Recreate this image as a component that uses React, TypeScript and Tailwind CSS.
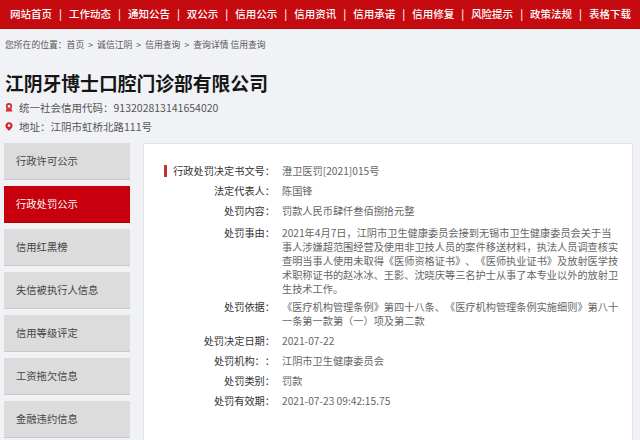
import React from 'react';

const navItems = [
  '网站首页',
  '工作动态',
  '通知公告',
  '双公示',
  '信用公示',
  '信用资讯',
  '信用承诺',
  '信用修复',
  '风险提示',
  '政策法规',
  '表格下载',
];

const sideItems = [
  '行政许可公示',
  '行政处罚公示',
  '信用红黑榜',
  '失信被执行人信息',
  '信用等级评定',
  '工资拖欠信息',
  '金融违约信息',
];

interface Row {
  label: string;
  lines: string[];
  first?: boolean;
  cls?: string;
}

const rows: Row[] = [
  { label: '行政处罚决定书文号：', lines: ['澄卫医罚[2021]015号'], first: true },
  { label: '法定代表人：', lines: ['陈国锋'] },
  { label: '处罚内容：', lines: ['罚款人民币肆仟叁佰捌拾元整'] },
  {
    label: '处罚事由：',
    lines: [
      '2021年4月7日，江阴市卫生健康委员会接到无锡市卫生健康委员会关于当',
      '事人涉嫌超范围经营及使用非卫技人员的案件移送材料，执法人员调查核实',
      '查明当事人使用未取得《医师资格证书》、《医师执业证书》及放射医学技',
      '术职称证书的赵冰冰、王影、沈晓庆等三名护士从事了本专业以外的放射卫',
      '生技术工作。',
    ],
    cls: 'pt-[5px] pb-[1px]',
  },
  {
    label: '处罚依据：',
    lines: [
      '《医疗机构管理条例》第四十八条、《医疗机构管理条例实施细则》第八十',
      '一条第一款第（一）项及第二款',
    ],
  },
  { label: '处罚决定日期：', lines: ['2021-07-22'] },
  { label: '处罚机构：：', lines: ['江阴市卫生健康委员会'] },
  { label: '处罚类别：', lines: ['罚款'] },
  { label: '处罚有效期：', lines: ['2021-07-23 09:42:15.75'] },
];

const crumbs = ['首页', '诚信江阴', '信用查询', '查询详情 信用查询'];

const SealIcon = () => (
  <svg width="8" height="9" viewBox="0 0 8 9" className="shrink-0">
    <circle cx="4" cy="3.2" r="2.3" fill="none" stroke="#d0262b" strokeWidth="1.6" />
    <path d="M1.6 5.6 L0.6 8.6 H7.4 L6.4 5.6 L5.2 6.3 H2.8 Z" fill="#d0262b" />
  </svg>
);

const PinIcon = () => (
  <svg width="8" height="9" viewBox="0 0 8 9" className="shrink-0">
    <path d="M4 0.3 C1.9 0.3 0.4 1.8 0.4 3.7 C0.4 5.8 4 8.8 4 8.8 C4 8.8 7.6 5.8 7.6 3.7 C7.6 1.8 6.1 0.3 4 0.3 Z" fill="#d0262b" />
    <circle cx="4" cy="3.6" r="1.3" fill="#fff" />
  </svg>
);

export default function App() {
  return (
    <div
      className="w-[640px] h-[440px] overflow-hidden bg-[#f1f2f6] [text-spacing-trim:space-all]"
      style={{ fontFamily: '"Noto Sans CJK SC", "Noto Sans", sans-serif' }}
    >
      <div className="h-[29px] bg-[#c50b10] border-b border-[#b00509] flex items-center pl-[10px] gap-[7px] text-white text-[10.5px] font-medium whitespace-nowrap">
        {navItems.map((n, i) => (
          <React.Fragment key={n}>
            {i > 0 && <span>|</span>}
            <span>{n}</span>
          </React.Fragment>
        ))}
      </div>

      <div className="mt-[10px] px-[5px] flex items-center text-[8.8px] leading-[12px] text-[#555] whitespace-nowrap">
        <span>您所在的位置：</span>
        {crumbs.map((c, i) => (
          <React.Fragment key={c}>
            {i > 0 && <span className="mx-[4px]">&gt;</span>}
            <span>{c}</span>
          </React.Fragment>
        ))}
      </div>

      <h1 className="mt-[20px] px-[5px] text-[18.8px] leading-[24px] font-bold text-[#161616] whitespace-nowrap">
        江阴牙博士口腔门诊部有限公司
      </h1>

      <div className="mt-[3px] flex items-center gap-[6px] pl-[5px] h-[19px] text-[10.5px] text-[#555]">
        <SealIcon />
        <span>统一社会信用代码：913202813141654020</span>
      </div>
      <div className="flex items-center gap-[6px] pl-[5px] h-[19px] text-[10.5px] text-[#555]">
        <PinIcon />
        <span>地址：江阴市虹桥北路111号</span>
      </div>

      <div className="mt-[7px] flex items-start">
        <div className="ml-[4px] w-[126px] flex flex-col gap-[6.5px]">
          {sideItems.map((s, i) => (
            <div
              key={s}
              className={
                i === 1
                  ? 'h-[36.5px] flex items-center pl-[12px] bg-[#c8000d] border-b border-[#a80008] text-white text-[10.3px]'
                  : 'h-[36.5px] flex items-center pl-[12px] bg-[#dcdcdc] border-b border-[#c9c9c9] text-[#444] text-[10.3px]'
              }
            >
              {s}
            </div>
          ))}
        </div>

        <div className="ml-[13px] w-[490px] h-[320px] bg-white border border-[#e2e3e6] pt-[17px]">
          {rows.map((r) => (
            <div key={r.label} className={'flex text-[10.2px] leading-[14px] ' + (r.cls ?? 'py-[3px]')}>
              <div className="w-[131px] shrink-0 text-right text-[#333] whitespace-nowrap">
                {r.first && (
                  <span className="inline-block w-[3px] h-[12px] bg-[#c4302b] mr-[6px] align-[-2px]" />
                )}
                {r.label}
              </div>
              <div className="ml-[7px] text-[#666] whitespace-nowrap">
                {r.lines.map((l) => (
                  <div key={l}>{l}</div>
                ))}
              </div>
            </div>
          ))}
        </div>
      </div>
    </div>
  );
}
